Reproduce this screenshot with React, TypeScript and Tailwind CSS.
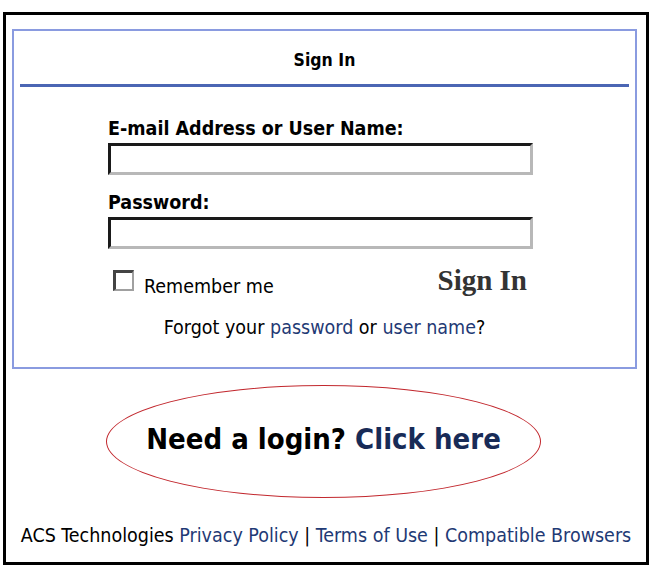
import React from "react";

const sans = "font-['DejaVu_Sans_Condensed','DejaVu_Sans',sans-serif]";
const link = "text-[#1f3a75]";

function TextInput({ type = "text" }: { type?: string }) {
  return (
    <input
      type={type}
      className="block h-[32px] w-[425px] border-[3px] border-t-[#1a1a1a] border-l-[#1a1a1a] border-r-[#b8b8b8] border-b-[#b8b8b8] bg-white px-1 outline-none"
    />
  );
}

export default function App() {
  return (
    <div className={`h-[573px] w-[651px] bg-white pl-[3px] pt-[12px] ${sans}`}>
      <div className="flex h-[553px] w-[646px] flex-col border-[3px] border-black px-[6px] pt-[14px]">
        {/* sign-in panel */}
        <div className="h-[340px] w-[625px] border-2 border-[#8a9be0]">
          <div className="flex h-[53px] items-center justify-center pt-[5px] text-[17.5px] font-bold text-black">
            Sign In
          </div>
          <div className="mx-[6px] h-[3px] bg-[#4b66b4]" />

          <form className="pl-[94px] pt-[31px]" onSubmit={(e) => e.preventDefault()}>
            <label className="block text-[19.5px] font-bold leading-[22px] text-black">
              E-mail Address or User Name:
            </label>
            <div className="mt-[3px]">
              <TextInput />
            </div>
            <label className="mt-[17px] block text-[19.5px] font-bold leading-[22px] text-black">
              Password:
            </label>
            <div className="mt-[3px]">
              <TextInput type="password" />
            </div>

            <div className="mt-[15px] flex h-[35px] w-[425px] items-start justify-between">
              <label className="flex items-start gap-[10px] pl-[5px]">
                <span className="mt-[6px] block h-[21px] w-[21px] border-t-[3px] border-l-[3px] border-r-2 border-b-2 border-t-[#444] border-l-[#444] border-r-[#a0a0a0] border-b-[#a0a0a0] bg-white" />
                <span className="mt-[12px] text-[19.5px] leading-[22px] text-black">Remember me</span>
              </label>
              <button
                type="submit"
                className="pr-[6px] font-['Liberation_Serif',serif] text-[29px] font-bold leading-[32px] text-[#333]"
              >
                Sign In
              </button>
            </div>

            <p className="mt-[18px] -ml-[94px] text-center text-[19.5px] leading-[22px] text-black">
              Forgot your <a className={link}>password</a> or <a className={link}>user name</a>?
            </p>
          </form>
        </div>

        {/* sign-up callout */}
        <div className="mt-[16px] pl-[94px]">
          <div className="flex h-[113px] w-[435px] items-center justify-center rounded-[50%] border-[1.5px] border-[#c2282e] pb-[4px]">
            <span className="text-[29px] font-bold text-black">
              Need a login? <a className="text-[#182b57]">Click here</a>
            </span>
          </div>
        </div>

        <div className="mt-[27px] text-center text-[19.5px] leading-[22px] text-black">
          ACS Technologies <a className={link}>Privacy Policy</a> | <a className={link}>Terms of Use</a> |{" "}
          <a className={link}>Compatible Browsers</a>
        </div>
      </div>
    </div>
  );
}
